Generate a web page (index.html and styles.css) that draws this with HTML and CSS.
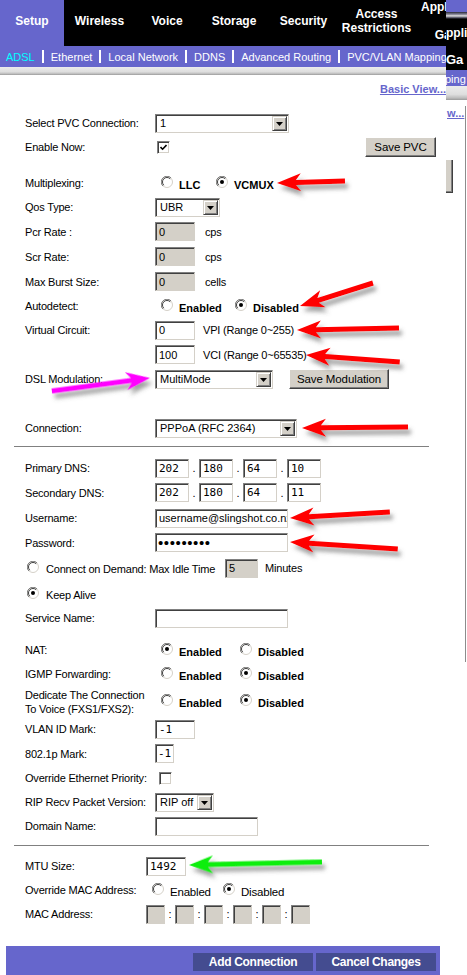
FILE: index.html
```html
<!DOCTYPE html>
<html>
<head>
<meta charset="utf-8">
<title>Setup - ADSL</title>
<link rel="stylesheet" href="styles.css">
</head>
<body>
<svg class="defs" width="0" height="0">
  <symbol id="r0" viewBox="0 0 12 12">
    <circle cx="6" cy="6" r="5.5" fill="#fff" stroke="#d4d0c8"/>
    <path d="M1.9,10.1 A5.5,5.5 0 0 1 10.1,1.9" fill="none" stroke="#808080"/>
    <path d="M2.8,9.2 A4.5,4.5 0 0 1 9.2,2.8" fill="none" stroke="#404040"/>
  </symbol>
  <symbol id="r1" viewBox="0 0 12 12">
    <circle cx="6" cy="6" r="5.5" fill="#fff" stroke="#d4d0c8"/>
    <path d="M1.9,10.1 A5.5,5.5 0 0 1 10.1,1.9" fill="none" stroke="#808080"/>
    <path d="M2.8,9.2 A4.5,4.5 0 0 1 9.2,2.8" fill="none" stroke="#404040"/>
    <circle cx="6" cy="6" r="2" fill="#000"/>
  </symbol>
  <symbol id="tri" viewBox="0 0 7 4">
    <polygon points="0,0 7,0 3.5,4" fill="#000"/>
  </symbol>
</svg>

<div class="shot">
  <div class="main">
    <div class="tabs">
      <div class="tab on t64">Setup</div>
      <div class="tab t71">Wireless</div>
      <div class="tab t64">Voice</div>
      <div class="tab t70">Storage</div>
      <div class="tab t69">Security</div>
      <div class="tab t77">Access<br>Restrictions</div>
      <div class="tab t84">Applications<br>&amp;<br>Gaming</div>
    </div>
    <div class="subnav">
      <span class="cur">ADSL</span><span class="sep"></span>
      <span>Ethernet</span><span class="sep"></span>
      <span>Local Network</span><span class="sep"></span>
      <span>DDNS</span><span class="sep"></span>
      <span>Advanced Routing</span><span class="sep"></span>
      <span>PVC/VLAN Mapping</span>
    </div>
    <div class="band"></div>
    <div class="toplink"><a class="blink">Basic View...</a></div>

    <div class="form">
      <div class="row">
        <span class="lbl">Select PVC Connection:</span>
        <span class="sel w134"><span>1</span><span class="dd"><svg width="7" height="4"><use href="#tri"/></svg></span></span>
      </div>
      <div class="row">
        <span class="lbl">Enable Now:</span>
        <span class="cb ml2"><svg width="7" height="7" viewBox="0 0 7 7"><polyline points="0.5,3 2.6,5.2 6.5,1" fill="none" stroke="#000" stroke-width="1.6"/></svg></span>
        <span class="btn savepvc">Save PVC</span>
      </div>
      <div class="row mt12">
        <span class="lbl">Multiplexing:</span>
        <span class="rg">
          <span class="opt o55"><svg class="rd"><use href="#r0"/></svg><b>LLC</b></span>
          <span class="opt"><svg class="rd"><use href="#r1"/></svg><b>VCMUX</b></span>
        </span>
      </div>
      <div class="row">
        <span class="lbl">Qos Type:</span>
        <span class="sel w65"><span>UBR</span><span class="dd"><svg width="7" height="4"><use href="#tri"/></svg></span></span>
      </div>
      <div class="row h25">
        <span class="lbl">Pcr Rate :</span>
        <span class="inp dis w40">0</span><span class="unit">cps</span>
      </div>
      <div class="row h25">
        <span class="lbl">Scr Rate:</span>
        <span class="inp dis w40">0</span><span class="unit">cps</span>
      </div>
      <div class="row h25">
        <span class="lbl">Max Burst Size:</span>
        <span class="inp dis w40">0</span><span class="unit">cells</span>
      </div>
      <div class="row">
        <span class="lbl">Autodetect:</span>
        <span class="rg">
          <span class="opt o74"><svg class="rd"><use href="#r0"/></svg><b>Enabled</b></span>
          <span class="opt"><svg class="rd"><use href="#r1"/></svg><b>Disabled</b></span>
        </span>
      </div>
      <div class="row">
        <span class="lbl">Virtual Circuit:</span>
        <span class="inp w40">0</span><span class="unit u8">VPI (Range 0~255)</span>
      </div>
      <div class="row h25">
        <span class="lbl"></span>
        <span class="inp w40">100</span><span class="unit u8">VCI (Range 0~65535)</span>
      </div>
      <div class="row">
        <span class="lbl">DSL Modulation:</span>
        <span class="sel w118"><span>MultiMode</span><span class="dd"><svg width="7" height="4"><use href="#tri"/></svg></span></span>
        <span class="btn savemod">Save Modulation</span>
      </div>
      <div class="row mt25">
        <span class="lbl">Connection:</span>
        <span class="sel w142"><span>PPPoA (RFC 2364)</span><span class="dd"><svg width="7" height="4"><use href="#tri"/></svg></span></span>
      </div>

      <div class="hr hr1"></div>

      <div class="row mt9">
        <span class="lbl">Primary DNS:</span>
        <span class="ip"><span class="inp mono w34">202</span><span class="dot">.</span><span class="inp mono w34">180</span><span class="dot">.</span><span class="inp mono w34">64</span><span class="dot">.</span><span class="inp mono w34">10</span></span>
      </div>
      <div class="row h25">
        <span class="lbl">Secondary DNS:</span>
        <span class="ip"><span class="inp mono w34">202</span><span class="dot">.</span><span class="inp mono w34">180</span><span class="dot">.</span><span class="inp mono w34">64</span><span class="dot">.</span><span class="inp mono w34">11</span></span>
      </div>
      <div class="row h26">
        <span class="lbl">Username:</span>
        <span class="inp w133">username@slingshot.co.nz</span>
      </div>
      <div class="row h23">
        <span class="lbl">Password:</span>
        <span class="inp w133 pw">•••••••••</span>
      </div>
      <div class="row h28 free">
        <svg class="rd"><use href="#r0"/></svg>
        <span class="rtxt">Connect on Demand: Max Idle Time</span>
        <span class="inp dis w33 idle">5</span>
        <span class="unit u7">Minutes</span>
      </div>
      <div class="row free">
        <svg class="rd"><use href="#r1"/></svg>
        <span class="rtxt">Keep Alive</span>
      </div>
      <div class="row">
        <span class="lbl">Service Name:</span>
        <span class="inp w133"></span>
      </div>
      <div class="row mt8">
        <span class="lbl">NAT:</span>
        <span class="rg">
          <span class="opt o79"><svg class="rd"><use href="#r1"/></svg><b>Enabled</b></span>
          <span class="opt"><svg class="rd"><use href="#r0"/></svg><b>Disabled</b></span>
        </span>
      </div>
      <div class="row">
        <span class="lbl">IGMP Forwarding:</span>
        <span class="rg">
          <span class="opt o79"><svg class="rd"><use href="#r0"/></svg><b>Enabled</b></span>
          <span class="opt"><svg class="rd"><use href="#r1"/></svg><b>Disabled</b></span>
        </span>
      </div>
      <div class="row h31">
        <span class="lbl two">Dedicate The Connection<br>To Voice (FXS1/FXS2):</span>
        <span class="rg">
          <span class="opt o79"><svg class="rd"><use href="#r0"/></svg><b>Enabled</b></span>
          <span class="opt"><svg class="rd"><use href="#r1"/></svg><b>Disabled</b></span>
        </span>
      </div>
      <div class="row">
        <span class="lbl">VLAN ID Mark:</span>
        <span class="inp mono w40">-1</span>
      </div>
      <div class="row h25">
        <span class="lbl">802.1p Mark:</span>
        <span class="inp mono w19 tight">-1</span>
      </div>
      <div class="row">
        <span class="lbl">Override Ethernet Priority:</span>
        <span class="cb ml4"></span>
      </div>
      <div class="row">
        <span class="lbl">RIP Recv Packet Version:</span>
        <span class="sel w59"><span>RIP off</span><span class="dd"><svg width="7" height="4"><use href="#tri"/></svg></span></span>
      </div>
      <div class="row">
        <span class="lbl">Domain Name:</span>
        <span class="inp w103"></span>
      </div>

      <div class="hr hr2"></div>

      <div class="row mt8">
        <span class="lbl n">MTU Size:</span>
        <span class="inp mono w40">1492</span>
      </div>
      <div class="row">
        <span class="lbl n">Override MAC Address:</span>
        <span class="rg">
          <span class="opt o71"><svg class="rd"><use href="#r0"/></svg><span class="rn">Enabled</span></span>
          <span class="opt"><svg class="rd"><use href="#r1"/></svg><span class="rn">Disabled</span></span>
        </span>
      </div>
      <div class="row">
        <span class="lbl n">MAC Address:</span>
        <span class="ip"><span class="inp dis w19"></span><span class="dot">:</span><span class="inp dis w19"></span><span class="dot">:</span><span class="inp dis w19"></span><span class="dot">:</span><span class="inp dis w19"></span><span class="dot">:</span><span class="inp dis w19"></span><span class="dot">:</span><span class="inp dis w19"></span></span>
      </div>
    </div>

    <div class="bar">
      <span class="pbtn">Add Connection</span>
      <span class="pbtn">Cancel Changes</span>
    </div>
  </div>

  <div class="side">
    <div class="s-pur"></div>
    <div class="s-grad"></div>
    <div class="s-blk"><span class="s-t1">ppli</span><span class="s-t2">Ga</span></div>
    <div class="s-sub">ping</div>
    <div class="s-band"></div>
    <div class="s-frame">
      <a class="s-link">w...</a>
      <div class="s-btn"></div>
    </div>
  </div>

  <svg class="arrows" width="467" height="975" viewBox="0 0 467 975">
    <defs>
      <filter id="sh" x="-30%" y="-100%" width="160%" height="300%">
        <feDropShadow dx="3" dy="5" stdDeviation="2" flood-color="#555" flood-opacity="0.55"/>
      </filter>
    </defs>
    <g filter="url(#sh)" fill="#ff0000">
      <polygon transform="translate(277 183) rotate(-1.68)" points="0,0 24,-9 19,-2.5 68,-2.5 68,2.5 19,2.5 24,9"/>
      <polygon transform="translate(300 306) rotate(-17.49)" points="0,0 24,-9 19,-2.5 76.5,-2.5 76.5,2.5 19,2.5 24,9"/>
      <polygon transform="translate(297 330) rotate(-1.12)" points="0,0 24,-9 19,-2.5 102,-2.5 102,2.5 19,2.5 24,9"/>
      <polygon transform="translate(306 355) rotate(4.26)" points="0,0 24,-9 19,-2.5 94,-2.5 94,2.5 19,2.5 24,9"/>
      <polygon transform="translate(302 428) rotate(-0.54)" points="0,0 24,-9 19,-2.5 106,-2.5 106,2.5 19,2.5 24,9"/>
      <polygon transform="translate(290 518) rotate(-3.43)" points="0,0 24,-9 19,-2.5 100,-2.5 100,2.5 19,2.5 24,9"/>
      <polygon transform="translate(290 542) rotate(3.71)" points="0,0 24,-9 19,-2.5 108,-2.5 108,2.5 19,2.5 24,9"/>
      <polygon fill="#ff00ff" transform="translate(150 378) rotate(172.44)" points="0,0 24,-9 19,-2.5 99,-2.5 99,2.5 19,2.5 24,9"/>
      <polygon fill="#11ee11" transform="translate(189 865) rotate(-1.29)" points="0,0 24,-9 19,-2.5 133,-2.5 133,2.5 19,2.5 24,9"/>
    </g>
  </svg>
</div>
</body>
</html>
```

FILE: styles.css
```css
* { box-sizing: border-box; }

body {
  margin: 0;
  background: #fff;
  font-family: "Liberation Sans", Arial, sans-serif;
  font-size: 11px;
  color: #000;
}

.defs { position: absolute; width: 0; height: 0; }

.shot {
  position: relative;
  display: flex;
  width: 467px;
  height: 975px;
  overflow: hidden;
}

.main {
  width: 446px;
  flex: none;
  overflow: hidden;
}

/* top tabs */
.tabs {
  display: flex;
  height: 46px;
  background: #000;
}
.tab {
  flex: none;
  display: flex;
  align-items: center;
  justify-content: center;
  text-align: center;
  color: #fff;
  font-weight: bold;
  font-size: 12px;
  line-height: 14px;
  padding-bottom: 4px;
  white-space: nowrap;
}
.tab.on { background: #6666cc; }
.t64 { width: 64px; }
.t69 { width: 69px; }
.t70 { width: 70px; }
.t71 { width: 71px; }
.t77 { width: 77px; }
.t84 { width: 84px; }

/* sub nav */
.subnav {
  display: flex;
  align-items: center;
  gap: 7px;
  height: 21px;
  padding-left: 6px;
  background: #6666cc;
  color: #fff;
  font-size: 11px;
  white-space: nowrap;
}
.subnav .cur { color: #00ffff; }
.sep {
  flex: none;
  width: 2px;
  height: 13px;
  background: #fff;
}

.band {
  height: 8px;
  background: linear-gradient(#ececec, #dedede 60%, #bdbdbd 85%, #9a9a9a);
}

.toplink {
  height: 28px;
  display: flex;
  align-items: center;
  justify-content: flex-end;
}
.blink {
  color: #6666cc;
  font-weight: bold;
  font-size: 11px;
  text-decoration: underline;
}

/* form */
.form { padding-top: 8px; }

.row {
  display: flex;
  align-items: center;
  height: 24px;
  padding-left: 25px;
  letter-spacing: -0.2px;
  white-space: nowrap;
}
.row.free { padding-left: 27px; }
.h23 { height: 23px; }
.h25 { height: 25px; }
.h26 { height: 26px; }
.h28 { height: 28px; }
.h31 { height: 31px; }
.mt8 { margin-top: 8px; }
.mt9 { margin-top: 9px; }
.mt12 { margin-top: 12px; }
.mt25 { margin-top: 25px; }

.lbl { width: 130px; flex: none; }
.lbl.n { width: 121px; }
.lbl.two { line-height: 14px; }

.sel {
  flex: none;
  display: flex;
  align-items: center;
  justify-content: space-between;
  height: 19px;
  padding-left: 4px;
  background: #fff;
  border: 1px solid;
  border-color: #808080 #d4d0c8 #d4d0c8 #808080;
  box-shadow: inset 1px 1px #404040;
  letter-spacing: 0;
}
.dd {
  flex: none;
  display: flex;
  align-items: center;
  justify-content: center;
  width: 15px;
  height: 15px;
  margin-right: 1px;
  margin-top: 1px;
  background: #d4d0c8;
  border: 1px solid;
  border-color: #d4d0c8 #404040 #404040 #d4d0c8;
  box-shadow: inset 1px 1px #fff, inset -1px -1px #808080;
}
.dd svg { display: block; }

.inp {
  flex: none;
  display: flex;
  align-items: center;
  height: 19px;
  padding-left: 3px;
  background: #fff;
  border: 1px solid;
  border-color: #808080 #d4d0c8 #d4d0c8 #808080;
  box-shadow: inset 1px 1px #404040;
  overflow: hidden;
  white-space: nowrap;
  letter-spacing: 0;
}
.inp.dis { background: #d4d0c8; }
.inp.mono {
  font-family: "DejaVu Sans Mono", "Liberation Mono", monospace;
  font-size: 11px;
}
.inp.tight { padding-left: 2px; }
.inp.pw {
  font-size: 15px;
  letter-spacing: 0.6px;
  padding-left: 2px;
}

.w19 { width: 19px; }
.w33 { width: 33px; }
.w34 { width: 34px; }
.w40 { width: 40px; }
.w59 { width: 59px; }
.w65 { width: 65px; }
.w103 { width: 103px; }
.w118 { width: 118px; }
.w133 { width: 133px; }
.w134 { width: 134px; }
.w142 { width: 142px; }

.unit { margin-left: 10px; }
.unit.u8 { margin-left: 8px; }
.unit.u7 { margin-left: 7px; }

.ip { display: flex; align-items: center; }
.dot { width: 10px; text-align: center; flex: none; }

.cb {
  flex: none;
  display: flex;
  align-items: center;
  justify-content: center;
  width: 13px;
  height: 13px;
  background: #fff;
  border: 1px solid;
  border-color: #808080 #fff #fff #808080;
  box-shadow: inset 1px 1px #404040, inset -1px -1px #d4d0c8;
}
.cb svg { display: block; }
.ml2 { margin-left: 2px; }
.ml4 { margin-left: 4px; }

.btn {
  flex: none;
  display: flex;
  align-items: center;
  justify-content: center;
  height: 20px;
  background: #d4d0c8;
  border: 1px solid;
  border-color: #fff #404040 #404040 #fff;
  box-shadow: inset -1px -1px #808080;
  font-size: 11.5px;
  letter-spacing: -0.1px;
}
.savepvc { width: 71px; margin-left: auto; margin-right: 10px; }
.savemod { width: 100px; margin-left: 16px; }

.rg { display: flex; align-items: center; padding-left: 6px; }
.opt { display: flex; align-items: center; flex: none; }
.o55 { width: 55px; }
.o71 { width: 71px; }
.o74 { width: 74px; }
.o79 { width: 79px; }
.rd {
  flex: none;
  width: 12px;
  height: 12px;
  margin-bottom: 3px;
}
.opt b {
  margin-left: 6px;
  padding-top: 3px;
  font-size: 11px;
  letter-spacing: 0;
}
.opt .rn {
  margin-left: 6px;
  padding-top: 3px;
  font-size: 11.5px;
  letter-spacing: -0.2px;
}
.rtxt { margin-left: 7px; padding-top: 2px; }
.idle { margin-left: 10px; }

.hr {
  width: 415px;
  height: 1px;
  margin-left: 14px;
  background: #808080;
}
.hr1 { margin-top: 6px; }
.hr2 { margin-top: 7px; }

.bar {
  display: flex;
  justify-content: flex-end;
  gap: 3px;
  width: 434px;
  height: 40px;
  margin: 20px 0 0 6px;
  padding: 7px 4px 0 0;
  background: #6666cc;
}
.pbtn {
  display: flex;
  align-items: center;
  justify-content: center;
  width: 120px;
  height: 18px;
  background: #444c90;
  color: #fff;
  font-weight: bold;
  font-size: 12px;
  letter-spacing: -0.3px;
}

/* overlapping strip of a second screenshot on the right */
.side {
  width: 21px;
  flex: none;
  overflow: hidden;
  white-space: nowrap;
}
.s-pur { height: 12px; background: #6666cc; }
.s-grad {
  height: 7px;
  background: linear-gradient(#2a2a3a, #8a8a9a 35%, #e0e0e0 55%, #5a5a6a 80%, #000);
}
.s-blk {
  height: 51px;
  background: #000;
  color: #fff;
  font-weight: bold;
  font-size: 12px;
  line-height: 14px;
  padding-top: 7px;
}
.s-t1 { display: block; }
.s-t2 { display: block; margin-top: 13px; font-size: 13px; }
.s-sub {
  height: 16px;
  background: #6666cc;
  color: #fff;
  font-size: 11px;
  line-height: 16px;
  margin-left: -1px;
  padding-top: 1px;
}
.s-band {
  height: 14px;
  background: linear-gradient(#ececec, #dedede 60%, #bdbdbd 85%, #9a9a9a);
}
.s-frame {
  width: 20px;
  height: 556px;
  margin-top: 6px;
  border-right: 1px solid #8c8c8c;
}
.s-link {
  display: block;
  color: #6666cc;
  font-weight: bold;
  font-size: 11px;
  line-height: 14px;
  text-decoration: underline;
  margin-left: 1px;
}
.s-btn {
  width: 7px;
  height: 33px;
  margin-top: 40px;
  background: #d4d0c8;
  border-right: 1px solid #404040;
  border-bottom: 1px solid #404040;
  box-shadow: inset -1px -1px #808080;
}

/* annotation arrows drawn over the screenshot */
.arrows {
  position: absolute;
  left: 0;
  top: 0;
  pointer-events: none;
}
```
